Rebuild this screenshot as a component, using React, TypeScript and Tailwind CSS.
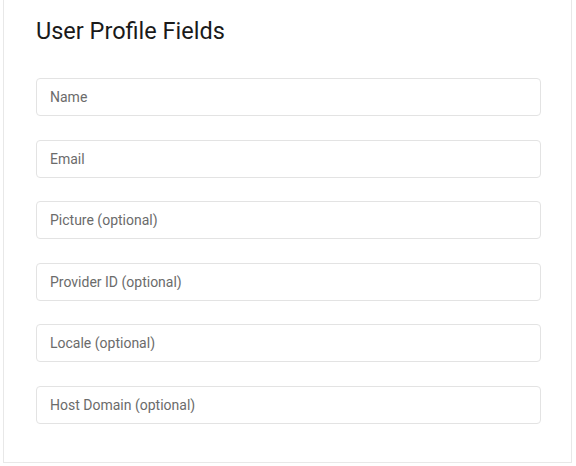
import React from 'react';

const fields = [
  'Name',
  'Email',
  'Picture (optional)',
  'Provider ID (optional)',
  'Locale (optional)',
  'Host Domain (optional)',
];

export default function App() {
  return (
    <div className="h-[466px] w-[576px] overflow-hidden bg-white font-['Roboto',sans-serif]">
      <div className="ml-[3px] h-[463px] w-[569px] border-x border-b border-[#e8e8e8] bg-white pl-[32px] pt-[15px]">
        <h1 className="text-[23.5px] leading-[32px] font-normal text-[#1a1a1a]">
          User Profile Fields
        </h1>
        <div className="mt-[31px] flex flex-col gap-[23.6px]">
          {fields.map((f) => (
            <input
              key={f}
              type="text"
              placeholder={f}
              className="h-[38px] w-[505px] rounded-[4px] border border-[#e3e3e3] bg-white px-[13px] text-[14px] text-[#333] outline-none placeholder:text-[#6b6b6b]"
            />
          ))}
        </div>
      </div>
    </div>
  );
}
